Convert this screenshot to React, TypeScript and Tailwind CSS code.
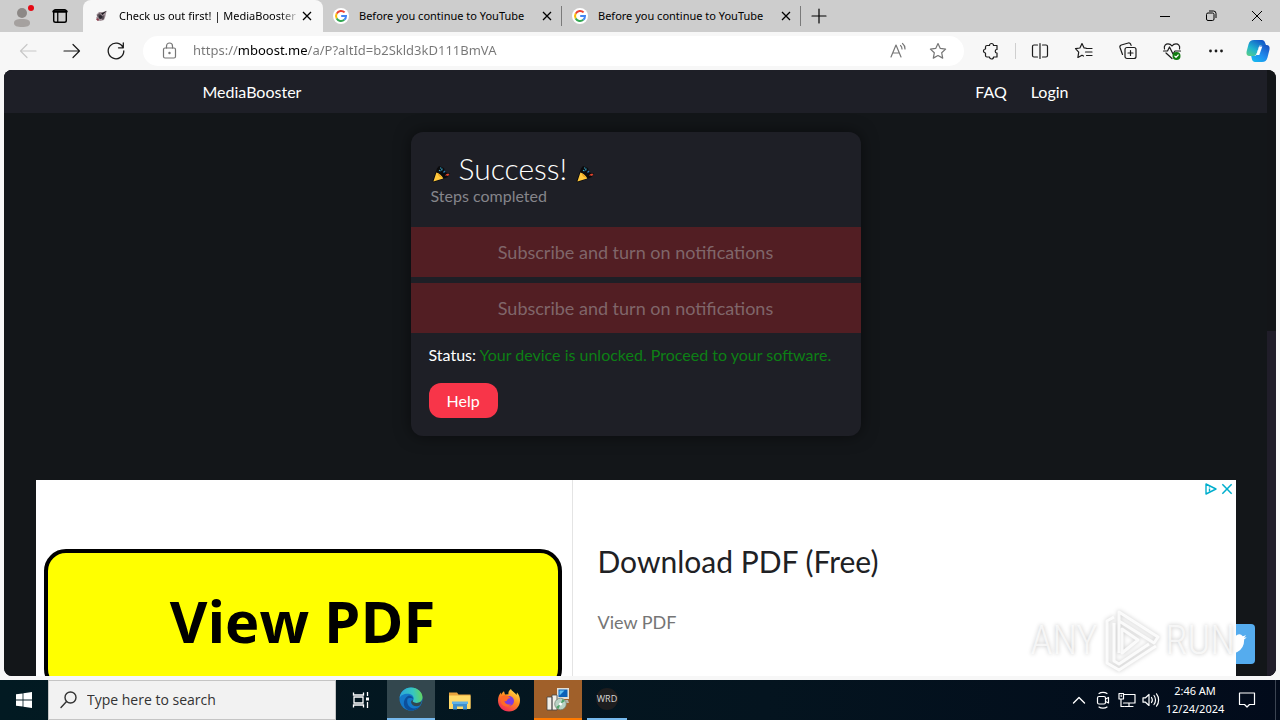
import type { ReactNode } from "react";

interface Tab {
  id: number;
  title: string;
  active: boolean;
}

const tabs: Tab[] = [
  { id: 1, title: "Check us out first! | MediaBooster", active: true },
  { id: 2, title: "Before you continue to YouTube", active: false },
  { id: 3, title: "Before you continue to YouTube", active: false },
];

const steps = [
  { id: 1, label: "Subscribe and turn on notifications" },
  { id: 2, label: "Subscribe and turn on notifications" },
];

// Thin line icon on a 20px grid
function Icon({
  children,
  className = "size-5",
}: {
  children: ReactNode;
  className?: string;
}) {
  return (
    <svg
      viewBox="0 0 20 20"
      fill="none"
      stroke="currentColor"
      strokeWidth="1.2"
      strokeLinecap="round"
      strokeLinejoin="round"
      className={`shrink-0 ${className}`}
      aria-hidden="true"
    >
      {children}
    </svg>
  );
}

function CloseIcon({ className = "size-3" }: { className?: string }) {
  return (
    <svg
      viewBox="0 0 12 12"
      fill="none"
      stroke="currentColor"
      strokeWidth="1.3"
      className={className}
      aria-hidden="true"
    >
      <path d="M2 2l8 8M10 2l-8 8" />
    </svg>
  );
}

function GoogleIcon() {
  return (
    <svg viewBox="0 0 16 16" className="size-4 shrink-0" aria-hidden="true">
      <circle cx="8" cy="8" r="8" fill="#fff" />
      <g fill="none" strokeWidth="2">
        <path d="M11.6 4.4A5 5 0 0 0 3.7 5.6" stroke="#ea4335" />
        <path d="M3.7 5.6a5 5 0 0 0 0 4.8" stroke="#fbbc05" />
        <path d="M3.7 10.4a5 5 0 0 0 7.6 1.4" stroke="#34a853" />
        <path d="M11.3 11.8A5 5 0 0 0 13 8H8.2" stroke="#4285f4" />
      </g>
    </svg>
  );
}

function RocketIcon() {
  return (
    <svg viewBox="0 0 16 16" className="size-4 shrink-0" aria-hidden="true">
      <path d="M13.500 3L10 4 6 4 3.500 6.500l.5 2L3 10l1.500 2.500 3 .5 3.500-1 1.500-4z" fill="#a3939a" />
      <path d="M13.800 2.800L9.500 7 8 5.500z" fill="#1d1b20" />
      <path d="M4 7l3-2 1 2-3 2zM9 8l2.500-1-.5 4-2 1z" fill="#5c525a" />
      <circle cx="7.500" cy="9" r="2" fill="#2b2730" />
      <path d="M3 11.500l2-1.500 1 2-1 1z" fill="#8d3c4c" />
    </svg>
  );
}

function PartyIcon() {
  return (
    <svg viewBox="0 0 20 20" className="size-5" aria-hidden="true">
      <path
        d="M6 4.500L1.500 17.200l1 1.300 14-5.200 2.500-3.800-4.500-1-1.500-4.500L8 2z"
        fill="#0b0b0d"
      />
      <path d="M5.400 8.400L2.400 17.400 12.300 14.600c-1-2.600-3.700-5.400-6.900-6.200z" fill="#ffc83d" />
      <path d="M6.500 9.500c1.800.4 3.800 2.200 4.600 4.200-1.800 0-4-2-4.600-4.200z" fill="#e8a321" />
      <path d="M8 6.200l1.500.8M11 4.500l-.3 2M9.500 3.500l.3 1" stroke="#38a8cc" strokeWidth="1.200" />
      <path d="M12.500 8.500l1.500-1.500" stroke="#2f7fb8" strokeWidth="1.200" />
      <path d="M14.200 11.500c.8-1.600 2.200-2 4.200-1.500l-1.300 2c-1.200-.5-1.900-.1-2.900-.5z" fill="#e0442e" />
    </svg>
  );
}

function CopilotIcon() {
  return (
    <svg viewBox="0 0 24 24" className="size-6" aria-hidden="true">
      <defs>
        <linearGradient id="cpLeft" x1="0" y1="1" x2="0.7" y2="0">
          <stop offset="0" stopColor="#5fd07f" />
          <stop offset="0.45" stopColor="#20b4cf" />
          <stop offset="1" stopColor="#1358c9" />
        </linearGradient>
        <linearGradient id="cpRight" x1="0" y1="1" x2="0.8" y2="0">
          <stop offset="0" stopColor="#16c1ee" />
          <stop offset="0.5" stopColor="#1f8ff0" />
          <stop offset="1" stopColor="#1b56c4" />
        </linearGradient>
      </defs>
      <path
        d="M8 1h8c1.500 0 2.500 1 3 2.500L20 6h-4.500c-1.500 0-2.300.8-2.800 2.300l-2 6.200C10 16.700 8.700 17 7 17H3.500C1 17 0 15 .6 12.500l2-7.500C3.400 2.200 5 1 8 1z"
        fill="url(#cpLeft)"
      />
      <path
        d="M16 23H9c-1.500 0-2.500-1-3-2.500L5.200 17H8c1.500 0 2.500-.8 3-2.300l2-6.200C13.600 6.700 14.800 6 16.500 6h4c2.500 0 3.500 2 3 4.500l-2 8C20.700 21.500 19 23 16 23z"
        fill="url(#cpRight)"
      />
      <path d="M13.300 7.500h3l-3 8.500h-3.200z" fill="#fff" />
    </svg>
  );
}

function TitleBar() {
  return (
    <div className="flex h-8 shrink-0 bg-[#cdcdcd] text-black">
      <button aria-label="Profile" className="flex w-11 items-center justify-center">
        <svg viewBox="0 0 24 24" className="size-6" aria-hidden="true">
          <circle cx="12" cy="9" r="5" fill="#8c8886" />
          <path d="M4 19c0-3 2.500-4 8-4s8 1 8 4-3 4-8 4-8-1-8-4z" fill="#a5a19f" />
          <circle cx="21" cy="4" r="3" fill="#e50914" />
        </svg>
      </button>
      <button aria-label="Tab actions" className="flex w-8 items-center justify-center">
        <Icon className="size-[18px]">
          <rect x="3" y="3" width="14" height="14" rx="2" strokeWidth="1.600" />
          <path d="M3 5h14" strokeWidth="3" />
          <path d="M7.500 6v11" strokeWidth="1.400" />
        </Icon>
      </button>
      <div className="ml-[7px] flex min-w-0">
        {tabs.map((tab) => (
          <div
            key={tab.id}
            className={`flex min-w-0 items-center px-2.5 ${
              tab.active ? "w-60 rounded-t-lg bg-[#f7f7f7]" : "w-[239px]"
            }`}
          >
            {tab.active ? <RocketIcon /> : <GoogleIcon />}
            <span
              className={`ml-2.5 min-w-0 flex-1 overflow-hidden font-['Noto_Sans',sans-serif] text-[11px] whitespace-nowrap ${
                tab.active
                  ? "[mask-image:linear-gradient(to_right,black_88%,transparent)]"
                  : ""
              }`}
            >
              {tab.title}
            </span>
            <button aria-label="Close tab">
              <CloseIcon />
            </button>
            {!tab.active && <span className="-mr-2.5 ml-2 h-5 w-px bg-[#7a7a7a]" />}
          </div>
        ))}
        <button aria-label="New tab" className="flex w-9 items-center justify-center">
          <Icon>
            <path d="M10 3v14M3 10h14" />
          </Icon>
        </button>
      </div>
      <div className="ml-auto flex">
        <button aria-label="Minimize" className="flex w-[46px] items-center justify-center">
          <svg viewBox="0 0 12 12" className="size-3" stroke="#000" aria-hidden="true">
            <path d="M1 6.500h10" />
          </svg>
        </button>
        <button aria-label="Restore" className="flex w-[46px] items-center justify-center">
          <svg viewBox="0 0 12 12" className="size-3" fill="none" stroke="#000" aria-hidden="true">
            <rect x="1.500" y="3" width="7.500" height="7.500" rx="1.500" />
            <path d="M4 1h4.500a2.500 2.500 0 0 1 2.500 2.500V8" />
          </svg>
        </button>
        <button aria-label="Close" className="flex w-[46px] items-center justify-center">
          <svg viewBox="0 0 12 12" className="size-3" stroke="#000" aria-hidden="true">
            <path d="M1 1l10 10M11 1L1 11" />
          </svg>
        </button>
      </div>
    </div>
  );
}

function ToolButton({ label, children }: { label: string; children: ReactNode }) {
  return (
    <button aria-label={label} className="flex w-11 shrink-0 items-center justify-center">
      {children}
    </button>
  );
}

function Toolbar() {
  return (
    <div className="flex h-[38px] shrink-0 items-center pl-1.5 text-[#1b1b1b]">
      <button
        disabled
        aria-label="Back"
        className="flex w-11 items-center justify-center text-[#c8c8c8]"
      >
        <Icon>
          <path d="M18 10H2.500M9 3.500L2.500 10 9 16.500" />
        </Icon>
      </button>
      <ToolButton label="Forward">
        <Icon>
          <path d="M2 10h15.500M11 3.500l6.500 6.500-6.500 6.500" />
        </Icon>
      </ToolButton>
      <ToolButton label="Refresh">
        <Icon>
          <path d="M17 6.500A7.800 7.800 0 1 0 17.800 10M17.300 2v4.800h-4.800" strokeWidth="1.300" />
        </Icon>
      </ToolButton>
      <div className="mx-[5px] flex h-[30px] flex-1 items-center rounded-full bg-white pr-1.5 pl-4 text-[#767676]">
        <Icon>
          <rect x="4.500" y="7" width="12" height="10" rx="1.500" />
          <path d="M7.500 7V5a3 3 0 0 1 6 0v2" />
          <circle cx="10.500" cy="12" r="0.600" fill="currentColor" />
        </Icon>
        <input
          aria-label="Address"
          defaultValue="https://mboost.me/a/P?altId=b2Skld3kD111BmVA"
          className="ml-3.5 min-w-0 flex-1 bg-[linear-gradient(to_right,#767676_45px,#000_45px,#000_115px,#767676_115px)] bg-clip-text font-['Noto_Sans',sans-serif] text-[13px] text-transparent outline-none"
        />
        <button aria-label="Read aloud" className="flex w-10 justify-center">
          <Icon>
            <path d="M3 16L8 4l5 12M4.800 12h6.400M12.500 4.500c1 .8 1.500 2 1.500 3.500M14.500 2.500c1.700 1.300 2.500 3.200 2.500 5.500" />
          </Icon>
        </button>
        <button aria-label="Add to favorites" className="flex w-10 justify-center">
          <Icon>
            <path d="M10 2.500l2.300 4.900 5.300.7-3.900 3.700 1 5.300L10 14.500l-4.700 2.600 1-5.300-3.900-3.700 5.300-.7z" />
          </Icon>
        </button>
      </div>
      <ToolButton label="Extensions">
        <Icon>
          <path d="M6 4.500h2.500a2 2 0 0 1 4 0H16v4a1.800 1.800 0 0 0 0 3.600V16h-3.500a2 2 0 0 1-4 0H6a1.500 1.500 0 0 1-1.500-1.500V12a2 2 0 0 1 0-4V6A1.500 1.500 0 0 1 6 4.500z" />
        </Icon>
      </ToolButton>
      <span className="mx-0.5 h-4 w-px bg-[#cfcfcf]" />
      <ToolButton label="Split screen">
        <Icon>
          <path d="M7.500 4H4a1.500 1.500 0 0 0-1.500 1.500v9A1.500 1.500 0 0 0 4 16h3.500M12.500 4H16a1.500 1.500 0 0 1 1.500 1.500v9A1.500 1.500 0 0 1 16 16h-3.500M10 2.500v15" />
        </Icon>
      </ToolButton>
      <ToolButton label="Favorites">
        <Icon>
          <path d="M12 7.200l-1.900-.3L8 2.500 5.900 7l-4.400.7 3.200 3.400-.8 5.400 4.100-2.300 1.500.8M12.500 7.500H18M11.500 11H18M12.500 14.500H18" />
        </Icon>
      </ToolButton>
      <ToolButton label="Collections">
        <Icon>
          <rect x="7" y="6.500" width="11" height="11" rx="2" />
          <path d="M12.500 9.500v5M10 12h5M4.500 13.500L2 6.500A2 2 0 0 1 3.300 4l7-2a2 2 0 0 1 2.500 1.500l.3.900" />
        </Icon>
      </ToolButton>
      <ToolButton label="Browser essentials">
        <Icon>
          <path d="M2.500 8C1.500 4.500 4 2.800 6 2.800c2 0 3.200 1 4 2.200.8-1.200 2-2.200 4-2.200s4.500 1.700 3.500 5.200M4 12l6 5.500M1.500 10h4L7.500 6l3.500 7 2-3h5.500" />
          <circle cx="14.500" cy="15" r="4" fill="#107c10" stroke="none" />
          <path d="M12.800 15.200l1.200 1.200 2.200-2.400" stroke="#fff" />
        </Icon>
      </ToolButton>
      <ToolButton label="Settings and more">
        <Icon>
          <g fill="currentColor" stroke="none">
            <circle cx="4.500" cy="10" r="1.400" />
            <circle cx="10" cy="10" r="1.400" />
            <circle cx="15.500" cy="10" r="1.400" />
          </g>
        </Icon>
      </ToolButton>
      <button aria-label="Copilot" className="flex w-[42px] items-center justify-start pl-2">
        <CopilotIcon />
      </button>
    </div>
  );
}

function SuccessCard() {
  return (
    <section className="mx-auto mt-[19px] w-[450px] rounded-xl bg-[#1e1f26] pb-[18px] shadow-[0_0_16px_rgba(0,0,0,0.5)]">
      <div className="px-5 pt-[18px] pb-[21px]">
        <h1 className="flex items-center gap-2 text-[30px] leading-9 font-light">
          <span className="pt-3">
            <PartyIcon />
          </span>
          Success!
          <span className="pt-3">
            <PartyIcon />
          </span>
        </h1>
        <p className="text-base leading-5 text-[#85858b]">Steps completed</p>
      </div>
      <div className="flex flex-col gap-1.5">
        {steps.map((step) => (
          <button
            key={step.id}
            disabled
            className="h-[50px] w-full bg-[#521e23] text-lg text-[#80666a]"
          >
            {step.label}
          </button>
        ))}
      </div>
      <div className="px-[18px] pt-2.5">
        <p className="text-base">
          Status:{" "}
          <span className="text-[#0d8015]">
            Your device is unlocked. Proceed to your software.
          </span>
        </p>
        <button className="mt-4 h-[35px] rounded-xl bg-[#f83549] px-[18px] text-base">
          Help
        </button>
      </div>
    </section>
  );
}

function AdBanner() {
  return (
    <aside className="relative z-10 mx-auto mt-11 flex h-[280px] w-full max-w-[1200px] shrink-0 bg-white">
      <div className="w-[537px] shrink-0 border-r border-[#e4e4e4] pt-[69px] pr-2.5 pl-2">
        <button className="flex h-[142px] w-full items-center justify-center rounded-[22px] border-4 border-black bg-[#ffff00] font-['Open_Sans','Noto_Sans',sans-serif] text-[58px] font-bold text-black">
          View PDF
        </button>
      </div>
      <div className="pt-[63px] pl-[25px]">
        <h2 className="text-[30px] leading-9 text-[#202124]">Download PDF (Free)</h2>
        <p className="mt-[31px] text-lg leading-6 text-[#757575]">View PDF</p>
      </div>
      <div className="absolute top-0.5 right-0.5 flex items-center gap-0.5 text-[#00aecd]">
        <svg viewBox="0 0 14 14" className="size-3.5" fill="none" stroke="currentColor" strokeWidth="1.400" aria-hidden="true">
          <path d="M2 2v10l10-5z" strokeLinejoin="round" />
          <path d="M5.500 6.500v3M5.500 4.500v1" />
        </svg>
        <button aria-label="Close ad">
          <CloseIcon className="size-3.5" />
        </button>
      </div>
    </aside>
  );
}

function Watermark() {
  return (
    <div className="pointer-events-none absolute right-8 bottom-0 z-20 flex h-[70px] items-center gap-1 font-['Roboto_Condensed','Open_Sans_Condensed','Liberation_Sans_Narrow',sans-serif] text-[40px] font-light text-white/70 [text-shadow:0_0_4px_rgba(0,0,0,0.25)]">
      <span>ANY</span>
      <svg
        viewBox="0 0 60 64"
        className="h-16 w-[60px] drop-shadow-[0_0_2px_rgba(0,0,0,0.25)]"
        fill="none"
        stroke="rgba(255,255,255,0.85)"
        strokeWidth="3"
        strokeLinejoin="round"
        aria-hidden="true"
      >
        <path d="M17 44V3l39 25-4 6L17 12" />
        <path d="M12 8L5 12v42l12 7 37-24" />
        <path d="M12 14v38l5 3 30-20" />
        <path d="M20 20v24l16-13z" />
      </svg>
      <span>RUN</span>
    </div>
  );
}

function Page() {
  return (
    <div className="mx-1 mb-1 flex min-h-0 flex-1 overflow-hidden rounded-lg bg-[#131518] font-['Lato',sans-serif] text-white">
      <div className="relative flex min-w-0 flex-1 flex-col overflow-hidden bg-[#131619]">
        <header className="h-[43px] shrink-0 bg-[#1e1f27]">
          <nav className="mx-auto flex h-full max-w-[866px] items-center gap-6 text-base">
            <a href="#home" className="mr-auto">
              MediaBooster
            </a>
            <a href="#faq">FAQ</a>
            <a href="#login">Login</a>
          </nav>
        </header>
        <SuccessCard />
        <AdBanner />
        <a
          href="#twitter"
          aria-label="Twitter"
          className="absolute right-3 bottom-3 flex size-10 items-center justify-center rounded bg-[#55acee]"
        >
          <svg viewBox="0 0 24 24" className="size-6" fill="#fff" aria-hidden="true">
            <path d="M23.600 4.900a9.600 9.600 0 0 1-2.800.8 4.900 4.900 0 0 0 2.100-2.700 9.700 9.700 0 0 1-3.100 1.200 4.800 4.800 0 0 0-8.300 4.400A13.700 13.700 0 0 1 1.700 3.600a4.800 4.800 0 0 0 1.500 6.500 4.800 4.800 0 0 1-2.200-.6 4.800 4.800 0 0 0 3.900 4.800 4.900 4.900 0 0 1-2.200.1 4.800 4.800 0 0 0 4.500 3.300A9.700 9.700 0 0 1 0 19.700a13.700 13.700 0 0 0 21.100-12.200 9.700 9.700 0 0 0 2.500-2.600z" />
          </svg>
        </a>
        <Watermark />
      </div>
      {/* Scrollbar */}
      <div className="flex w-[9px] flex-col justify-end bg-[#131518]">
        <div className="h-[57%] bg-[#201d29]" />
      </div>
    </div>
  );
}

function Taskbar() {
  return (
    <footer className="flex h-10 shrink-0 bg-[linear-gradient(to_right,#021a22,#04141f_60%,#020b1b)] text-white">
      <button aria-label="Start" className="flex w-12 items-center justify-center">
        <svg viewBox="0 0 16 16" className="size-4" fill="#fff" aria-hidden="true">
          <path d="M0 2.300l6.600-.9v6.200H0zM7.400 1.300L16 0v7.600H7.400zM0 8.400h6.600v6.200L0 13.700zM7.400 8.400H16V16l-8.600-1.200z" />
        </svg>
      </button>
      <label className="flex w-72 items-center gap-2 border border-[#c5c5c5] bg-[#f2f2f2] pl-2.5 text-[#333]">
        <Icon>
          <circle cx="11.500" cy="7.500" r="5.500" strokeWidth="1.400" />
          <path d="M7.500 11.500L2 17.500" strokeWidth="1.400" />
        </Icon>
        <input
          aria-label="Search"
          placeholder="Type here to search"
          className="min-w-0 flex-1 text-sm outline-none placeholder:text-[#333]"
        />
      </label>
      <div className="flex gap-px">
        <button aria-label="Task View" className="flex w-[50px] items-center justify-center">
          <svg viewBox="0 0 18 18" className="size-[18px]" fill="none" stroke="#fff" strokeWidth="1.300" aria-hidden="true">
            <path d="M1.500 1.500v2.500h10V1.500M1.500 16.500V14h10v2.500M2 6h9v6H2zM15.500 1v4M15.500 11v6" />
            <path d="M14 6.500h3v3h-3z" fill="#fff" stroke="none" />
          </svg>
        </button>
        <button
          aria-label="Microsoft Edge"
          className="flex w-12 items-center justify-center border-b-2 border-[#76b9ed] bg-[#33474e]"
        >
          <svg viewBox="0 0 24 24" className="size-6" aria-hidden="true">
            <defs>
              <linearGradient id="edgeTop" x1="0" y1="0.500" x2="1" y2="0.400">
                <stop offset="0" stopColor="#2aa5dc" />
                <stop offset="0.600" stopColor="#37c6c0" />
                <stop offset="1" stopColor="#64d65c" />
              </linearGradient>
            </defs>
            <circle cx="12" cy="12" r="11.500" fill="#1478c8" />
            <path d="M.6 11C1.200 4.800 6 .5 12 .5c6.500 0 11.500 4.700 11.500 9.800 0 3.500-2.500 5.700-5.800 5.700-2.600 0-4-1-4-1.700 0-.6 1-1 1-2.900 0-2.500-2.300-4.700-6-4.700C4.500 6.700 1.500 8.500.6 11z" fill="url(#edgeTop)" />
            <path d="M8.500 12c-1.500 5 2.300 9.500 6.500 9.500 2.500 0 4.800-1 6.300-2.500C19.300 21.800 16 23.500 12 23.500 7 23.500 4 19 5 14.500c.5-2.400 2.200-4.800 5-6 2.600.3 4.200 1.800 4.200 3.500-.6-1.200-4.800-1.700-5.700 0z" fill="#0c4f9b" />
            <path d="M13.700 14.300c0 .7 1.400 1.700 4 1.700 2.300 0 4.200-1 5.200-2.800-.3 2-1 3.800-2.200 5.300-3.200 1.600-8.300.5-8.700-3.500 0-1 .8-1.600 1.700-2.600z" fill="#33474e" />
          </svg>
        </button>
        <button aria-label="File Explorer" className="flex w-12 items-center justify-center">
          <svg viewBox="0 0 24 24" className="size-6" aria-hidden="true">
            <path d="M1 4.500h8l1.500 2H22.500V20H1z" fill="#e8a33d" />
            <path d="M1 7.500h21.500V21H1z" fill="#ffd968" />
            <path d="M5 21.500v-6.500h14v6.500h-4v-3H9v3z" fill="#3f8fcb" />
            <path d="M4 13.500h16V16H4z" fill="#5fb1e8" />
          </svg>
        </button>
        <button aria-label="Firefox" className="flex w-12 items-center justify-center">
          <svg viewBox="0 0 24 24" className="size-6" aria-hidden="true">
            <defs>
              <linearGradient id="fox" x1="0.800" y1="0" x2="0.200" y2="1">
                <stop offset="0" stopColor="#ffe14a" />
                <stop offset="0.450" stopColor="#ff8a1e" />
                <stop offset="1" stopColor="#f0205e" />
              </linearGradient>
            </defs>
            <path d="M14 1c.5 2 4 3.500 5.500 6l.5-2.500c2 2.300 3 5 3 8C23 19 18 23.500 12 23.500S1 19 1 12.500C1 9 2.300 6 4 4.500l.3 2.300C5 5 6 4 7 3.300L8 6.500l3.500-.3C11 4 12.500 2 14 1z" fill="url(#fox)" />
            <circle cx="12" cy="13" r="5" fill="#7a3be0" />
            <path d="M4 9c2-2 5-2 7-1 1 .6 2 1.300 2.500 2-1.500.3-3 1-3.500 2.300-.5 1.300-2 1.200-2.700.7C8 16 11 17.500 14 16c-1.500 3.500-7.500 3.500-9.500-.5C3.500 13.500 3.200 11 4 9z" fill="#ff6a26" />
          </svg>
        </button>
        <button
          aria-label="Installer"
          className="flex w-12 items-center justify-center border-b-2 border-[#ff7a00] bg-[#a0602a]"
        >
          <svg viewBox="0 0 24 24" className="size-6" aria-hidden="true">
            <path d="M11 1h12v11H11z" fill="#e4e0d5" />
            <path d="M12.500 2.500h9v7.500h-9z" fill="#0b62b8" />
            <path d="M13.500 3.500l5 0-5 5z" fill="#5fc3f5" />
            <path d="M10 13h12l1 3H10z" fill="#b7b4a9" />
            <path d="M1 10h5v13H1zM6 8h5v15H6z" fill="#f1efe8" stroke="#444" strokeWidth="0.800" />
            <circle cx="14.500" cy="17" r="5.800" fill="#b9d2c4" stroke="#6b7c72" strokeWidth="0.700" />
            <path d="M14.500 17l2-5 2.500 2zM14.500 17l-2 5-2.500-2z" fill="#4fa36a" />
            <circle cx="14.500" cy="17" r="1.500" fill="#fff" />
          </svg>
        </button>
        <button
          aria-label="WRD"
          className="mx-1 flex w-10 items-center justify-center border-b-2 border-[#76b9ed]"
        >
          <span className="flex size-[22px] items-center justify-center rounded-full bg-[#1d1d1f] text-[9px] text-[#d8d8d8]">
            WRD
          </span>
        </button>
      </div>
      <div className="ml-auto flex items-center">
        <button aria-label="Show hidden icons" className="flex w-6 justify-center">
          <Icon>
            <path d="M4.500 13l5.500-5.500 5.500 5.500" strokeWidth="1.400" />
          </Icon>
        </button>
        <button aria-label="Meet Now" className="flex w-6 justify-center">
          <Icon>
            <rect x="4.500" y="6.500" width="8" height="7.500" rx="1.500" />
            <path d="M12.500 9l3-1.500v5.500l-3-1.500M6 3.500c2-1.500 6-1.500 8 0M6 17c2 1.500 6 1.500 8 0" />
          </Icon>
        </button>
        <button aria-label="Network" className="flex w-6 justify-center">
          <Icon>
            <path d="M7 4.500h11v8.500H6.500M12 13v3.500M8 16.500h8M4 9v7.500h3M2 3.500h4.500V9H2zM4.200 5v1.500" />
          </Icon>
        </button>
        <button aria-label="Volume" className="flex w-6 justify-center">
          <Icon>
            <path d="M2 7.800h2.500L8 4.500v11l-3.500-3.300H2zM10.500 7.500c1 1.500 1 3.500 0 5M13 5.500c2 2.500 2 6.500 0 9M15.500 3.800c2.800 3.500 2.800 8.900 0 12.400" />
          </Icon>
        </button>
        <time className="w-16 text-center font-['Noto_Sans',sans-serif] text-[11px] leading-[18px] whitespace-nowrap">
          2:46 AM
          <br />
          12/24/2024
        </time>
        <button aria-label="Notifications" className="flex w-10 justify-center">
          <Icon>
            <path d="M2.500 3h15v11.500h-5L10 17l-2.500-2.500h-5z" />
          </Icon>
        </button>
        <span className="mr-1 ml-2 h-full w-px bg-[#3b4452]" />
      </div>
    </footer>
  );
}

export default function App() {
  return (
    <div className="flex h-screen flex-col overflow-hidden bg-[#f7f7f7] font-['Open_Sans','Noto_Sans',sans-serif]">
      <TitleBar />
      <Toolbar />
      <Page />
      <Taskbar />
    </div>
  );
}
